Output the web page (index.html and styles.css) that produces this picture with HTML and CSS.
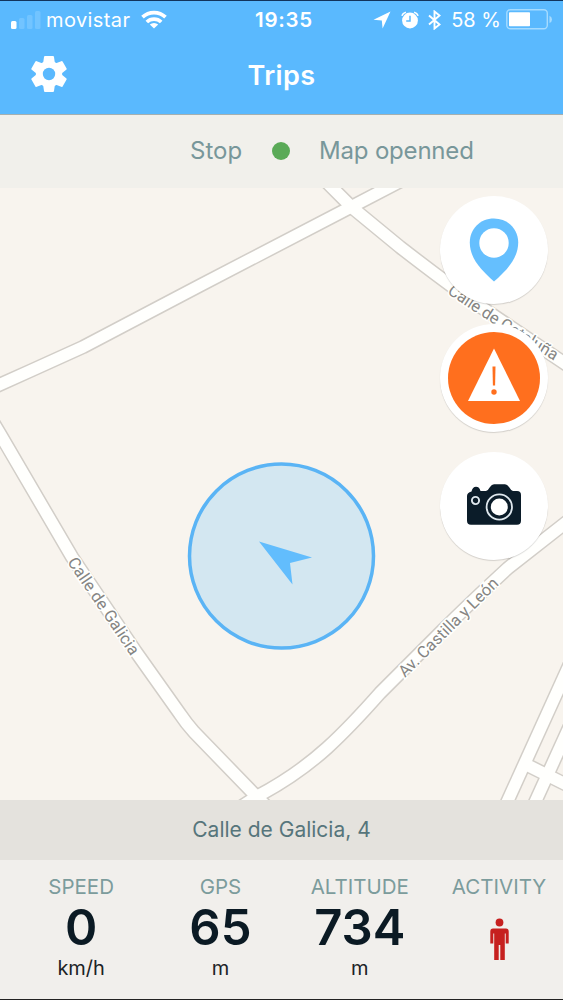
FILE: index.html
```html
<!DOCTYPE html>
<html lang="en">
<head>
    <meta charset="UTF-8">
    <meta name="viewport" content="width=device-width, initial-scale=1.0">
    <title>Trips</title>
    <link rel="stylesheet" href="styles.css">
</head>
<body>
    <header class="header">
        <div class="status-bar">
            <div class="status-left">
                <svg class="signal" width="30" height="18" viewBox="0 0 30 18">
                    <rect x="0" y="10" width="5.5" height="8" rx="1.5" fill="#fff"/>
                    <rect x="8" y="7" width="5.5" height="11" rx="1.5" fill="#72c4ff"/>
                    <rect x="16" y="4" width="5.5" height="14" rx="1.5" fill="#72c4ff"/>
                    <rect x="24" y="0" width="5.5" height="18" rx="1.5" fill="#72c4ff"/>
                </svg>
                <span class="carrier">movistar</span>
                <svg class="wifi" width="26" height="19" viewBox="0 0 26 19">
                    <g fill="none" stroke="#fff" stroke-width="3.7">
                        <path d="M1.5 7.2 A16.5 16.5 0 0 1 24.5 7.2"/>
                        <path d="M5.8 12 A10.4 10.4 0 0 1 20.2 12"/>
                    </g>
                    <path d="M13 18.6 L8.8 14.6 A6 6 0 0 1 17.2 14.6 Z" fill="#fff"/>
                </svg>
            </div>
            <span class="clock">19:35</span>
            <div class="status-right">
                <svg width="18" height="18" viewBox="0 0 18 18">
                    <path d="M17.5 0.5 L0.5 8.8 L8.8 9.4 L9.6 17.5 Z" fill="#fff"/>
                </svg>
                <svg class="alarm" width="18" height="18" viewBox="0 0 18 18">
                    <circle cx="9" cy="9.5" r="7.9" fill="#fff"/>
                    <path d="M0.9 4.8 Q1.8 2 4.9 1.2 M17.1 4.8 Q16.2 2 13.1 1.2" fill="none" stroke="#fff" stroke-width="1.7"/>
                    <path d="M9 4.7 V10 H5.2" fill="none" stroke="#5ab9fe" stroke-width="1.5"/>
                </svg>
                <svg class="bluetooth" width="13" height="20" viewBox="0 0 13 20">
                    <path d="M1 5.5 L11.5 14.5 L6.5 18.5 V1.5 L11.5 5.5 L1 14.5" fill="none" stroke="#fff" stroke-width="1.9"/>
                </svg>
                <span class="percent">58 %</span>
                <svg class="battery" width="47" height="21" viewBox="0 0 47 21">
                    <rect x="0.8" y="0.8" width="40.5" height="19" rx="3.5" fill="none" stroke="#a5dbff" stroke-width="1.4"/>
                    <rect x="3" y="3.3" width="21" height="14" rx="0.8" fill="#fff"/>
                    <path d="M43.5 6.8 Q46 8 46 10.4 Q46 12.8 43.5 14 Z" fill="#a5dbff"/>
                </svg>
            </div>
        </div>
        <div class="nav-bar">
            <svg class="gear" width="42" height="42" viewBox="-21 -21 42 42">
                <defs>
                    <path id="teeth" d="M-4 -18 H4 Q4.9 -18 5 -17 L6 -10 V10 L5 17 Q4.9 18 4 18 H-4 Q-4.900 18 -5 17 L-6 10 V-10 L-5 -17 Q-4.900 -18 -4 -18 Z"/>
                </defs>
                <g fill="#fff">
                    <circle r="13.2"/>
                    <use href="#teeth"/>
                    <use href="#teeth" transform="rotate(60)"/>
                    <use href="#teeth" transform="rotate(120)"/>
                </g>
                <circle r="6.2" fill="#5ab9fe"/>
            </svg>
            <h1>Trips</h1>
        </div>
    </header>

    <div class="trip-state">
        <span>Stop</span>
        <i class="dot"></i>
        <span class="map-state">Map openned</span>
    </div>

    <main class="map">
        <svg class="map-canvas" width="563" height="612" viewBox="0 188 563 612">
            <defs>
                <g id="roads" fill="none" stroke-linejoin="round">
                    <path d="M-10 389 L30 371 L83 347 L200 285.5 L350 207.5 L420 171"/>
                    <path d="M313 168 L332.5 188 L352 207.5 L400 247 Q445 282 478 305 L573 369"/>
                    <path d="M-10 417 L0 434 L72 557 L136 652 L180 714 Q186 723 194 732 L256 796 L275 815"/>
                    <path d="M230 814 L256 797 Q296 776 327 748 Q350 727 380 693 L444 629 Q470 603 508 568 L573 517"/>
                    <path d="M573 657 L504 809"/>
                    <path d="M573 719 L532 809"/>
                    <path d="M523 763 L573 788"/>
                </g>
                <path id="galicia" d="M67 562 L132 658"/>
                <path id="cataluna" d="M447 293 Q485 320 563 366"/>
                <path id="castilla" d="M405 678 L503 581"/>
            </defs>
            <use href="#roads" class="road-edge"/>
            <use href="#roads" class="road"/>
            <g class="street">
                <text><textPath href="#galicia" textLength="114">Calle de Galicia</textPath></text>
                <text><textPath href="#cataluna" textLength="127">Calle de Cataluña</textPath></text>
                <text><textPath href="#castilla" textLength="133">Av. Castilla y León</textPath></text>
            </g>
            <circle cx="281.5" cy="556" r="92" class="accuracy"/>
            <path d="M259 541.5 L312 557.5 L290 563 L292.5 584.5 Z" fill="#62bdfd"/>
        </svg>

        <div class="actions">
            <button class="action" aria-label="Location">
                <svg width="50" height="64" viewBox="0 0 50 64">
                    <path d="M25 0.5 C11 0.5 0.8 11 0.8 24.5 C0.8 41 13 52.5 25 63.5 C37 52.5 49.2 41 49.2 24.5 C49.2 11 39 0.5 25 0.5 Z" fill="#65bffe"/>
                    <circle cx="25" cy="25" r="14.7" fill="#fff"/>
                </svg>
            </button>
            <button class="action" aria-label="Alert">
                <svg width="92" height="92" viewBox="0 0 92 92">
                    <circle cx="46" cy="46" r="46" fill="#ff6f1e"/>
                    <path d="M46 16.5 L72 69 H20 Z" fill="#fff"/>
                    <path d="M44.5 34.5 H47.5 L47.1 53.5 H44.9 Z" fill="#ff6f1e"/>
                    <circle cx="46" cy="60" r="2.7" fill="#ff6f1e"/>
                </svg>
            </button>
            <button class="action" aria-label="Camera">
                <svg class="camera" width="54" height="41" viewBox="0 0 54 41">
                    <path d="M4.5 7.5 Q5.5 2.7 9 2.7 Q12.5 2.7 13.5 7 H19 Q21 6.5 23 3 Q24.8 0.3 27 0.3 H38 Q40.2 0.3 42 3 Q44 6.5 46 7 H50 Q54 7 54 11 V36.7 Q54 40.7 50 40.7 H4 Q0 40.7 0 36.7 V12 Q0 8.5 4.5 7.5 Z" fill="#0b1c29"/>
                    <circle cx="8.5" cy="16.5" r="3.6" fill="none" stroke="#dfe8ee" stroke-width="1.9"/>
                    <circle cx="32.3" cy="23" r="12.7" fill="none" stroke="#dfe8ee" stroke-width="1.8"/>
                    <circle cx="32.3" cy="23" r="8.5" fill="#fff"/>
                </svg>
            </button>
        </div>
    </main>

    <div class="address">Calle de Galicia, 4</div>

    <footer class="stats">
        <div class="stat">
            <span class="label">SPEED</span>
            <span class="value">0</span>
            <span class="unit">km/h</span>
        </div>
        <div class="stat">
            <span class="label">GPS</span>
            <span class="value">65</span>
            <span class="unit">m</span>
        </div>
        <div class="stat">
            <span class="label">ALTITUDE</span>
            <span class="value">734</span>
            <span class="unit">m</span>
        </div>
        <div class="stat">
            <span class="label">ACTIVITY</span>
            <svg class="person" width="19" height="43" viewBox="0 0 19 43">
                <g fill="#c6201f">
                    <circle cx="9.5" cy="4.5" r="3.9"/>
                    <path d="M3 10.5 H16 Q18.7 10.5 18.7 13.5 V25.5 H15.7 V15.5 H14.8 V42 H10.3 V27 H8.7 V42 H4.2 V15.5 H3.3 V25.5 H0.3 V13.5 Q0.3 10.5 3 10.5 Z"/>
                </g>
            </svg>
        </div>
    </footer>
</body>
</html>
```
FILE: styles.css
```css
* {
    box-sizing: border-box;
    margin: 0;
    padding: 0;
}
body {
    width: 563px;
    height: 1000px;
    overflow: hidden;
    display: flex;
    flex-direction: column;
    font-family: 'Inter', 'Liberation Sans', sans-serif;
    background: #f8f4ee;
    border-bottom: 1px solid #222;
}
svg {
    display: block;
    flex: none;
}

/* Header */
.header {
    height: 115px;
    background: #5ab9fe;
    color: white;
    border-top: 1px solid #12345c;
    border-bottom: 1px solid #a5b0b0;
}
.status-bar {
    height: 37px;
    display: grid;
    grid-template-columns: 1fr auto 1fr;
    align-items: center;
    padding: 0 10px 0 11px;
    font-size: 20px;
}
.status-left, .status-right {
    display: flex;
    align-items: center;
}
.status-right {
    justify-content: flex-end;
}
.carrier {
    margin-left: 5px;
    letter-spacing: 0.4px;
}
.wifi {
    margin-left: 11px;
}
.clock {
    font-size: 20.5px;
    font-weight: 600;
    letter-spacing: 0.7px;
    margin-left: 4px;
}
.alarm {
    margin-left: 10px;
}
.bluetooth {
    margin-left: 9px;
}
.percent {
    margin-left: 10px;
}
.battery {
    margin-left: 5px;
}
.nav-bar {
    height: 74px;
    display: grid;
    grid-template-columns: 1fr auto 1fr;
    align-items: center;
    padding: 0 28px;
}
.gear {
    margin-top: -2px;
}
.nav-bar h1 {
    font-size: 27px;
    font-weight: 600;
    letter-spacing: 0.4px;
}

/* Trip state */
.trip-state {
    height: 73px;
    display: flex;
    align-items: center;
    padding: 0 0 3px 190px;
    background: #f1f0eb;
    color: #78979a;
    font-size: 24px;
}
.dot {
    width: 18px;
    height: 18px;
    margin: 2px 29px 0 30px;
    border-radius: 50%;
    background: #5aaa57;
}
.map-state {
    letter-spacing: -0.2px;
}

/* Map */
.map {
    position: relative;
    height: 612px;
}
.road-edge {
    stroke: #d2cec8;
    stroke-width: 14.5px;
}
.road {
    stroke: #fffffd;
    stroke-width: 11.5px;
}
.street {
    font-family: 'Roboto', sans-serif;
    font-size: 16.5px;
    fill: #858583;
    stroke: #fffffd;
    stroke-width: 3px;
    paint-order: stroke;
}
.accuracy {
    fill: #d3e7f1;
    stroke: #5ab4f5;
    stroke-width: 3.5px;
}
.actions {
    position: absolute;
    top: 8px;
    right: 15px;
    display: flex;
    flex-direction: column;
    gap: 20px;
}
.action {
    width: 108px;
    height: 108px;
    display: flex;
    align-items: center;
    justify-content: center;
    border: none;
    border-radius: 50%;
    background: white;
    box-shadow: 0 1px 1px rgba(0, 0, 0, 0.15);
}
.camera {
    margin-top: -3px;
}

/* Address */
.address {
    height: 60px;
    line-height: 59px;
    text-align: center;
    font-size: 21px;
    color: #56757b;
    background: #e4e2dd;
}

/* Stats */
.stats {
    height: 139px;
    display: grid;
    grid-template-columns: repeat(4, 139.3px);
    padding: 14px 0 0 11.5px;
    background: #f1efec;
}
.stat {
    display: flex;
    flex-direction: column;
    align-items: center;
}
.label {
    font-size: 20.5px;
    line-height: 26px;
    color: #7c9c9c;
}
.value {
    font-size: 49px;
    font-weight: 600;
    line-height: 56px;
    color: #0b1a24;
}
.unit {
    font-size: 20px;
    line-height: 24px;
    color: #1c2326;
}
.person {
    margin-top: 18px;
}
```
